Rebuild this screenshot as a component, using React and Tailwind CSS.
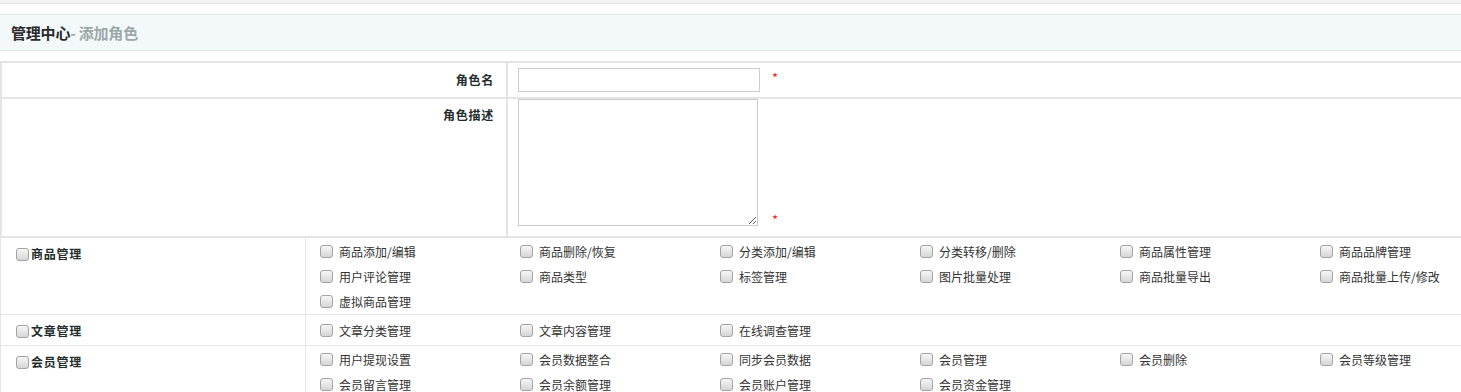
import React from "react";

const groups = [
  {
    name: "商品管理",
    items: [
      "商品添加/编辑",
      "商品删除/恢复",
      "分类添加/编辑",
      "分类转移/删除",
      "商品属性管理",
      "商品品牌管理",
      "用户评论管理",
      "商品类型",
      "标签管理",
      "图片批量处理",
      "商品批量导出",
      "商品批量上传/修改",
      "虚拟商品管理",
    ],
    pad: "pt-[1px] pb-0",
  },
  {
    name: "文章管理",
    items: ["文章分类管理", "文章内容管理", "在线调查管理"],
    pad: "pt-[3px] pb-[2px]",
  },
  {
    name: "会员管理",
    items: [
      "用户提现设置",
      "会员数据整合",
      "同步会员数据",
      "会员管理",
      "会员删除",
      "会员等级管理",
      "会员留言管理",
      "会员余额管理",
      "会员账户管理",
      "会员资金管理",
    ],
    pad: "pt-[1px] pb-0",
  },
];

function Box() {
  return (
    <span className="inline-block w-[13px] h-[13px] shrink-0 rounded-[3px] border border-[#a3a3a3] bg-linear-to-b from-[#f6f6f6] to-[#d6d6d6]"></span>
  );
}

export default function App() {
  return (
    <div className="w-[1461px] h-[392px] overflow-hidden bg-white font-['Noto_Sans_CJK_SC','Noto_Sans',sans-serif] text-[12px] text-[#333]">
      <div className="h-[3px] bg-[#f4f4f4] border-b border-[#e4e4e4] box-content"></div>
      <div className="h-[10px]"></div>
      <div className="h-[35px] box-content border-y border-[#e2e6e8] bg-[#f3f8fb] flex items-center pl-[11px] text-[15px] leading-none font-bold -tracking-[0.2px]">
        <span className="text-[#2a2a2a]">管理中心</span>
        <span className="text-[#9ba7a7]">- 添加角色</span>
      </div>
      <div className="h-[10px]"></div>

      {/* basic info */}
      <div className="border-t-2 border-l-2 border-[#e4e4e4]">
        <div className="flex h-[34px] box-content border-b-2 border-[#e4e4e4]">
          <div className="w-[504px] flex items-center justify-end pr-[12px] font-bold text-[#1f2d2d] tracking-[0.75px]">角色名</div>
          <div className="w-[2px] bg-[#e4e4e4]"></div>
          <div className="flex-1 flex items-center pl-[10px]">
            <input type="text" className="w-[242px] h-[24px] border border-[#cccccc] outline-none" />
            <span className="ml-[12px] text-[13px] leading-[13px] text-[#ff1a1a] -mt-[6px]">*</span>
          </div>
        </div>
        <div className="flex h-[137px] box-content border-b-2 border-[#e4e4e4]">
          <div className="w-[504px] flex justify-end pt-[9px] pr-[12px] font-bold text-[#1f2d2d] leading-[14px] tracking-[0.75px]">角色描述</div>
          <div className="w-[2px] bg-[#e4e4e4]"></div>
          <div className="flex-1 flex items-end pl-[10px] pb-[10px]">
            <textarea className="w-[240px] h-[127px] border border-[#cccccc] outline-none block"></textarea>
            <span className="ml-[14px] text-[13px] text-[#ff1a1a] mb-[0px] leading-[13px]">*</span>
          </div>
        </div>
      </div>

      {/* permissions */}
      <div className="border-l border-[#e4e4e4]">
        {groups.map((g, i) => (
          <div key={g.name} className={"flex " + (i < groups.length - 1 ? "border-b border-[#e6e6e6]" : "")}>
            <div className="w-[304px] shrink-0 pt-[9px] pl-[15px]">
              <div className="flex items-center h-[14px] gap-[2px] font-bold text-[#1f2d2d] tracking-[0.75px]">
                <Box />
                <span>{g.name}</span>
              </div>
            </div>
            <div className="w-[1px] shrink-0 bg-[#e6e6e6]"></div>
            <div className={"pl-[14px] grid grid-cols-[repeat(6,200px)] shrink-0 " + g.pad}>
              {g.items.map((it) => (
                <div key={it} className="h-[25px] flex items-center gap-[6px] whitespace-nowrap">
                  <Box />
                  <span>{it}</span>
                </div>
              ))}
            </div>
          </div>
        ))}
      </div>
    </div>
  );
}
